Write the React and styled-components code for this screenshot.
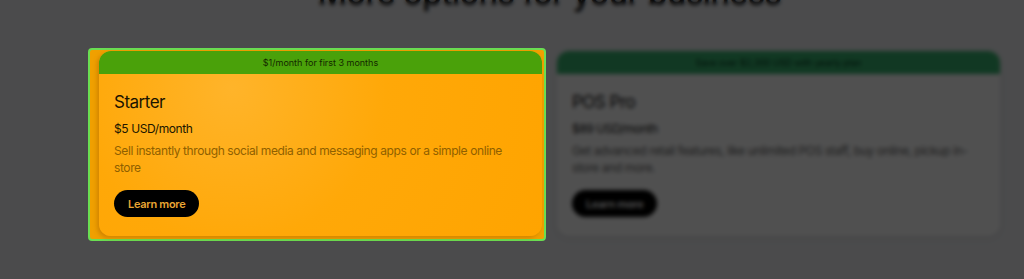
import styled, { createGlobalStyle, css } from "styled-components";

const GlobalStyle = createGlobalStyle`
  html, body {
    margin: 0;
    padding: 0;
    height: 100%;
    overflow: hidden;
    background: #eeeff2;
  }
  body {
    font-family: Inter, "Noto Sans", sans-serif;
  }
`;

const Page = styled.main`
  padding: 0 24px 0 99px;
`;

const Heading = styled.h2`
  margin: -24px 0 39px;
  font-size: 32px;
  line-height: 36px;
  font-weight: 500;
  letter-spacing: -0.4px;
  text-align: center;
  color: #000;
`;

const Grid = styled.div`
  display: grid;
  grid-template-columns: 1fr 1fr;
  column-gap: 15px;
`;

const Slot = styled.div`
  position: relative;
  ${(p) =>
    p.$spotlight &&
    css`
      z-index: 2;
      &::before {
        content: "";
        position: absolute;
        top: -3px;
        left: -11px;
        right: -4px;
        bottom: -5px;
        border: 2px solid #6ade52;
        border-radius: 4px;
        background: #f0a000;
      }
    `}
`;

const Card = styled.article`
  position: relative;
  border-radius: 12px;
  overflow: hidden;
  display: flex;
  flex-direction: column;
  background: ${(p) =>
    p.$spotlight
      ? "radial-gradient(circle at 30% 20%, #ffb42a 0%, #ffa808 45%, #ffa400 100%)"
      : "#ffffff"};
  box-shadow: ${(p) =>
    p.$spotlight
      ? "-2px 2px 4px rgba(150, 80, 0, 0.35)"
      : "0 2px 6px rgba(0, 0, 0, 0.08)"};
`;

const Banner = styled.div`
  height: 23px;
  display: flex;
  align-items: center;
  justify-content: center;
  font-size: 9px;
  background: ${(p) => (p.$spotlight ? "#4aa10a" : "#38b470")};
  color: ${(p) => (p.$spotlight ? "#142800" : "#06331c")};
`;

const Body = styled.div`
  padding: 16px 15px 19px;
  display: flex;
  flex-direction: column;
  align-items: flex-start;
`;

const Title = styled.h3`
  margin: 0;
  font-size: 17px;
  line-height: 24px;
  font-weight: 400;
  letter-spacing: -0.5px;
  color: ${(p) => (p.$spotlight ? "#1c1400" : "#111")};
`;

const Price = styled.div`
  margin-top: 6px;
  font-size: 12px;
  line-height: 18px;
  letter-spacing: -0.4px;
  color: ${(p) => (p.$spotlight ? "#201600" : "#111")};
`;

const Description = styled.p`
  margin: 3.5px 0 0;
  font-size: 12px;
  line-height: 17px;
  letter-spacing: -0.4px;
  color: ${(p) => (p.$spotlight ? "#8f6000" : "#666")};
`;

const Button = styled.button`
  margin-top: 14.5px;
  height: 27px;
  padding: 0 14px;
  border: none;
  border-radius: 999px;
  background: #000;
  font-family: inherit;
  font-size: 11px;
  font-weight: 600;
  letter-spacing: -0.3px;
  color: ${(p) => (p.$spotlight ? "#eaa633" : "#fff")};
  cursor: pointer;
`;

const Overlay = styled.div`
  position: fixed;
  inset: 0;
  z-index: 1;
  background: rgba(0, 0, 0, 0.686);
  backdrop-filter: blur(2px);
`;

const plans = [
  {
    name: "Starter",
    banner: "$1/month for first 3 months",
    price: "$5 USD/month",
    text: "Sell instantly through social media and messaging apps or a simple online store",
    spotlight: true,
  },
  {
    name: "POS Pro",
    banner: "Save over $2,300 USD with yearly plan",
    price: "$89 USD/month",
    text: "Get advanced retail features, like unlimited POS staff, buy online, pickup in-store and more.",
    spotlight: false,
  },
];

export default function App() {
  return (
    <>
      <GlobalStyle />
      <Page>
        <Heading>More options for your business</Heading>
        <Grid>
          {plans.map((plan) => (
            <Slot key={plan.name} $spotlight={plan.spotlight}>
              <Card $spotlight={plan.spotlight}>
                <Banner $spotlight={plan.spotlight}>{plan.banner}</Banner>
                <Body>
                  <Title $spotlight={plan.spotlight}>{plan.name}</Title>
                  <Price $spotlight={plan.spotlight}>{plan.price}</Price>
                  <Description $spotlight={plan.spotlight}>{plan.text}</Description>
                  <Button type="button" $spotlight={plan.spotlight}>
                    Learn more
                  </Button>
                </Body>
              </Card>
            </Slot>
          ))}
        </Grid>
      </Page>
      <Overlay />
    </>
  );
}
